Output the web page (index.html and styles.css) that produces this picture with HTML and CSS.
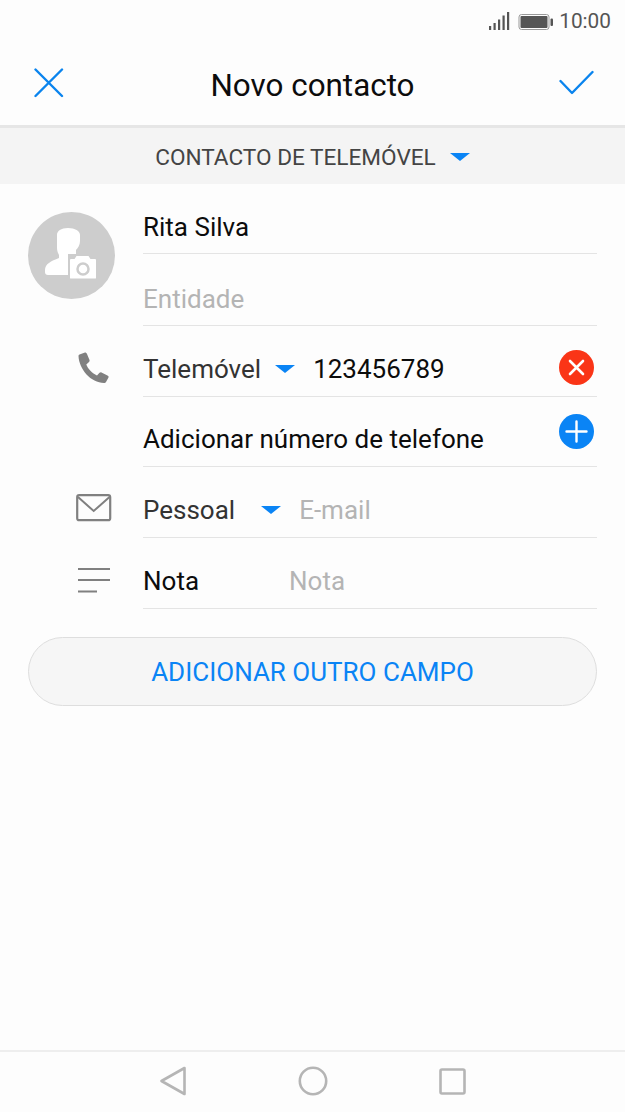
FILE: index.html
```html
<!DOCTYPE html>
<html lang="pt">
<head>
<meta charset="utf-8">
<title>Novo contacto</title>
<link rel="stylesheet" href="styles.css">
</head>
<body>
<div class="screen">
  <div class="status">
    <svg class="signal" width="21" height="20" viewBox="0 0 21 20"><g fill="#555"><rect x="0" y="15" width="2.200" height="4"/><rect x="4.500" y="12" width="2.200" height="7"/><rect x="9" y="8.500" width="2.200" height="10.500"/><rect x="13.500" y="4.500" width="2.200" height="14.500"/><rect x="18" y="1" width="2.200" height="18"/></g></svg>
    <svg class="battery" width="36" height="18" viewBox="0 0 36 18"><rect x="1" y="1.500" width="30" height="15" rx="2.500" fill="none" stroke="#999" stroke-width="1"/><rect x="2.500" y="3" width="27" height="12" rx="1" fill="#555"/><rect x="32.500" y="5.500" width="2.500" height="7.500" rx="1" fill="#555"/></svg>
    <span class="time">10:00</span>
  </div>
  <header class="appbar">
    <svg class="close" width="30" height="30" viewBox="0 0 30 30"><path d="M1.500 1.500 28 28M28 1.500 1.500 28" stroke="#0a84ee" stroke-width="2.400" stroke-linecap="round" fill="none"/></svg>
    <h1 class="title">Novo contacto</h1>
    <svg class="check" width="36" height="26" viewBox="0 0 36 26"><path d="M1.500 11 13 23 33.500 2" stroke="#0a84ee" stroke-width="2.400" stroke-linecap="round" stroke-linejoin="round" fill="none"/></svg>
  </header>
  <div class="account">
    <span>CONTACTO DE TELEMÓVEL</span><i class="caret caret-account"></i>
  </div>
  <main class="form">
    <section class="name-block">
      <div class="avatar-col">
        <svg class="avatar" width="87" height="87" viewBox="0 0 87 87">
          <circle cx="43.500" cy="43.500" r="43.500" fill="#cdcdcd"/>
          <path d="M29 23c0-4 4-7 11-7s12 3 12 7v6c0 4-2 7-4 9v4h-8v21H20c-2 0-3-1-3-3v-2c0-6 6-9 14-12v-3c-1-2-2-4-2-7z" fill="#fff"/>
          <path d="M41 48c0-1 1-2 2-2h3l2-3h13l2 3h4c1 0 2 1 2 2v18c0 1-1 1.500-2 1.500H43c-1 0-2-.5-2-1.500z" fill="#fff" stroke="#cdcdcd" stroke-width="2"/>
          <circle cx="55" cy="57" r="5.500" fill="none" stroke="#cdcdcd" stroke-width="2.500"/>
        </svg>
      </div>
      <div class="name-fields">
        <div class="field field-name"><span class="value">Rita Silva</span></div>
        <div class="field field-org"><span class="hint">Entidade</span></div>
      </div>
    </section>
    <section class="row">
      <div class="icon-col">
        <svg class="ico-phone" width="34" height="34" viewBox="0 0 34 34"><path d="M2.500 3.500 8 1.500c1 0 1.500.5 2 1.500l2.500 6c.3 1 0 1.500-.5 2l-2.700 2.500c1.500 4 6 9 10.700 11l2.500-2.700c.7-.6 1.300-.7 2-.4l6 3c1 .5 1.300 1 1 2l-2.500 4.600c-.5.800-1 1-2 1C14 32 2 18 1.500 5c0-.7.300-1.200 1-1.500z" fill="#808080"/></svg>
      </div>
      <div class="field field-tall">
        <span class="label label-type">Telemóvel</span><i class="caret caret-phone"></i><span class="value">123456789</span>
        <svg class="round" width="35" height="35" viewBox="0 0 35 35"><circle cx="17.500" cy="17.500" r="17.500" fill="#fa3517"/><path d="M11 11 24 24M24 11 11 24" stroke="#fff" stroke-width="2.600" stroke-linecap="round"/></svg>
      </div>
    </section>
    <section class="row">
      <div class="icon-col"></div>
      <div class="field field-add">
        <span class="value">Adicionar número de telefone</span>
        <svg class="round round-add" width="35" height="35" viewBox="0 0 35 35"><circle cx="17.500" cy="17.500" r="17.500" fill="#0a84f5"/><path d="M17.500 7.500v20M7.500 17.500h20" stroke="#fff" stroke-width="2.400" stroke-linecap="round"/></svg>
      </div>
    </section>
    <section class="row">
      <div class="icon-col">
        <svg class="ico-mail" width="36" height="28" viewBox="0 0 36 28"><rect x="1.200" y="1.200" width="33" height="25" rx="2" fill="none" stroke="#808080" stroke-width="2.200"/><path d="M2 3 17.700 17 33.500 3" fill="none" stroke="#808080" stroke-width="2"/></svg>
      </div>
      <div class="field field-tall">
        <span class="label label-mail">Pessoal</span><i class="caret caret-mail"></i><span class="hint">E-mail</span>
      </div>
    </section>
    <section class="row">
      <div class="icon-col">
        <svg class="ico-note" width="32" height="26" viewBox="0 0 32 26"><path d="M0 2h32M0 13h32M0 24.500h19" stroke="#808080" stroke-width="2.200" fill="none"/></svg>
      </div>
      <div class="field field-tall">
        <span class="value label-note">Nota</span><span class="hint">Nota</span>
      </div>
    </section>
    <button class="add-field" type="button">ADICIONAR OUTRO CAMPO</button>
  </main>
  <nav class="navbar">
    <svg width="28" height="30" viewBox="0 0 28 30"><path d="M25.500 2 2.500 15 25.500 28z" fill="none" stroke="#b5b5b5" stroke-width="2.600" stroke-linejoin="round"/></svg>
    <svg width="30" height="30" viewBox="0 0 30 30"><circle cx="15" cy="15" r="13.200" fill="none" stroke="#b5b5b5" stroke-width="2.600"/></svg>
    <svg width="27" height="27" viewBox="0 0 27 27"><rect x="1.500" y="1.500" width="24" height="24" rx="1.500" fill="none" stroke="#b5b5b5" stroke-width="2.600"/></svg>
  </nav>
</div>
</body>
</html>
```
FILE: styles.css
```css
* { box-sizing: border-box; }
html, body { margin: 0; padding: 0; }
body { background: #fdfdfd; font-family: Roboto, "Liberation Sans", sans-serif; }
.screen { width: 625px; height: 1112px; display: flex; flex-direction: column; overflow: hidden; }

.status { height: 42px; display: flex; align-items: center; justify-content: flex-end; padding-right: 14px; }
.signal { margin-right: 8px; }
.battery { margin-right: 5px; margin-top: 1px; }
.time { font-size: 20.800px; color: #555; }

.appbar { height: 83px; display: flex; align-items: center; justify-content: space-between; padding: 0 30px 0 34px; }
.close { margin-top: -2px; }
.check { margin-top: -1px; }
.title { margin: 0 0 0 2px; padding-top: 5px; font-size: 31.400px; line-height: 38px; font-weight: 400; color: #0c0c0c; }

.account { height: 59px; background: #f4f4f4; border-top: 3px solid #e6e6e6; display: flex; align-items: center; justify-content: center; font-size: 22.600px; color: #444; padding-top: 3px; }
.caret { display: inline-block; width: 0; height: 0; border-style: solid; border-width: 8px 10.500px 0; border-color: #0a84f5 transparent transparent; }
.caret-account { margin-left: 14px; margin-top: -1px; }
.caret-phone { margin: 0 18px 0 14px; }
.caret-mail { margin: 0 18px 0 26px; }

.form { flex: 1; padding: 0 28px; }
.name-block { display: flex; }
.avatar-col { width: 115px; padding-top: 28px; flex: none; }
.avatar { display: block; }
.name-fields { flex: 1; }
.field { flex: 1; display: flex; align-items: center; border-bottom: 1px solid #e4e4e4; font-size: 26px; position: relative; }
.field-name { height: 70px; padding-top: 17px; }
.field-org { height: 72px; padding-top: 18px; }
.field-tall { height: 71px; padding-top: 16px; }
.field-add { height: 70px; padding-top: 14px; }
.row { display: flex; }
.icon-col { width: 115px; flex: none; padding-left: 48px; display: flex; align-items: center; }
.value { color: #0c0c0c; }
.hint { color: #b4b4b4; }
.label { color: #333; }
.label-note { width: 146px; }
.round { margin-left: auto; margin-right: 3px; margin-top: -3px; }
.round-add { margin-top: -14px; }
.ico-phone { margin-left: 1px; margin-top: 12px; }
.ico-mail { margin-top: 10px; }
.ico-note { margin-left: 2px; margin-top: 12px; }

.add-field { display: block; width: 100%; height: 69px; margin-top: 28px; border: 1px solid #dedede; border-radius: 35px; background: #f6f6f6; color: #0a84f5; font: 400 26px Roboto, "Liberation Sans", sans-serif; }

.navbar { height: 62px; border-top: 2px solid #eeeeee; display: flex; align-items: center; justify-content: center; gap: 111px; padding-bottom: 2px; }
```
